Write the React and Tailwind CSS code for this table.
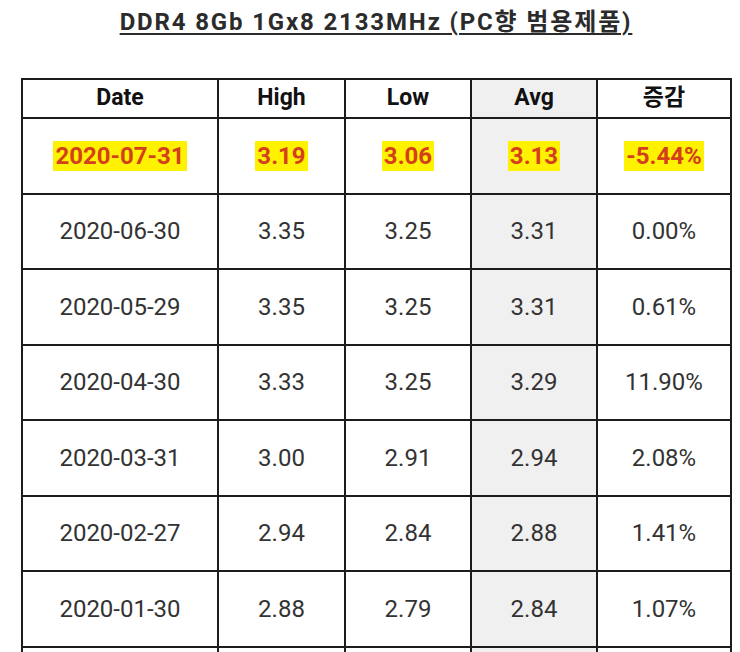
const rows = [
  { date: "2020-06-30", high: "3.35", low: "3.25", avg: "3.31", change: "0.00%" },
  { date: "2020-05-29", high: "3.35", low: "3.25", avg: "3.31", change: "0.61%" },
  { date: "2020-04-30", high: "3.33", low: "3.25", avg: "3.29", change: "11.90%" },
  { date: "2020-03-31", high: "3.00", low: "2.91", avg: "2.94", change: "2.08%" },
  { date: "2020-02-27", high: "2.94", low: "2.84", avg: "2.88", change: "1.41%" },
  { date: "2020-01-30", high: "2.88", low: "2.79", avg: "2.84", change: "1.07%" },
];

const latest = { date: "2020-07-31", high: "3.19", low: "3.06", avg: "3.13", change: "-5.44%" };

const cell = "border-2 border-[#1c1c1c] text-center align-middle";

function Mark({ children }) {
  return (
    <span className="bg-[#fff200] px-[2px] py-[1px] font-bold text-[#d4401c]">{children}</span>
  );
}

export default function App() {
  return (
    <div
      className="w-[740px] h-[652px] overflow-hidden bg-white"
      style={{ fontFamily: "Roboto, 'Noto Sans CJK KR', sans-serif" }}
    >
      <h1 className="pt-[5px] pl-[12px] text-center text-[24px] font-bold leading-[34px] tracking-[1.85px] text-[#2b2b2b] underline decoration-[2px] underline-offset-[3px]">
        DDR4 8Gb 1Gx8 2133MHz (PC향 범용제품)
      </h1>

      <div className="mt-[39px] pl-[21px]">
        <table className="w-[709px] table-fixed border-collapse text-[24px] text-[#333]">
          <colgroup>
            <col className="w-[196px]" />
            <col className="w-[127px]" />
            <col className="w-[126px]" />
            <col className="w-[126px]" />
            <col className="w-[134px]" />
          </colgroup>
          <thead>
            <tr className="h-[39px] text-[23px] font-bold text-[#111]">
              <th className={cell}>Date</th>
              <th className={cell}>High</th>
              <th className={cell}>Low</th>
              <th className={`${cell} bg-[#f0f0f0]`}>Avg</th>
              <th className={cell}>증감</th>
            </tr>
          </thead>
          <tbody>
            <tr className="h-[75.5px]">
              <td className={cell}><Mark>{latest.date}</Mark></td>
              <td className={cell}><Mark>{latest.high}</Mark></td>
              <td className={cell}><Mark>{latest.low}</Mark></td>
              <td className={`${cell} bg-[#f0f0f0]`}><Mark>{latest.avg}</Mark></td>
              <td className={cell}><Mark>{latest.change}</Mark></td>
            </tr>
            {rows.map((r) => (
              <tr key={r.date} className="h-[75.5px]">
                <td className={cell}>{r.date}</td>
                <td className={cell}>{r.high}</td>
                <td className={cell}>{r.low}</td>
                <td className={`${cell} bg-[#f0f0f0]`}>{r.avg}</td>
                <td className={cell}>{r.change}</td>
              </tr>
            ))}
            {/* next row continues below the fold */}
            <tr className="h-[75.5px]">
              <td className={cell}></td>
              <td className={cell}></td>
              <td className={cell}></td>
              <td className={`${cell} bg-[#f0f0f0]`}></td>
              <td className={cell}></td>
            </tr>
          </tbody>
        </table>
      </div>
    </div>
  );
}
